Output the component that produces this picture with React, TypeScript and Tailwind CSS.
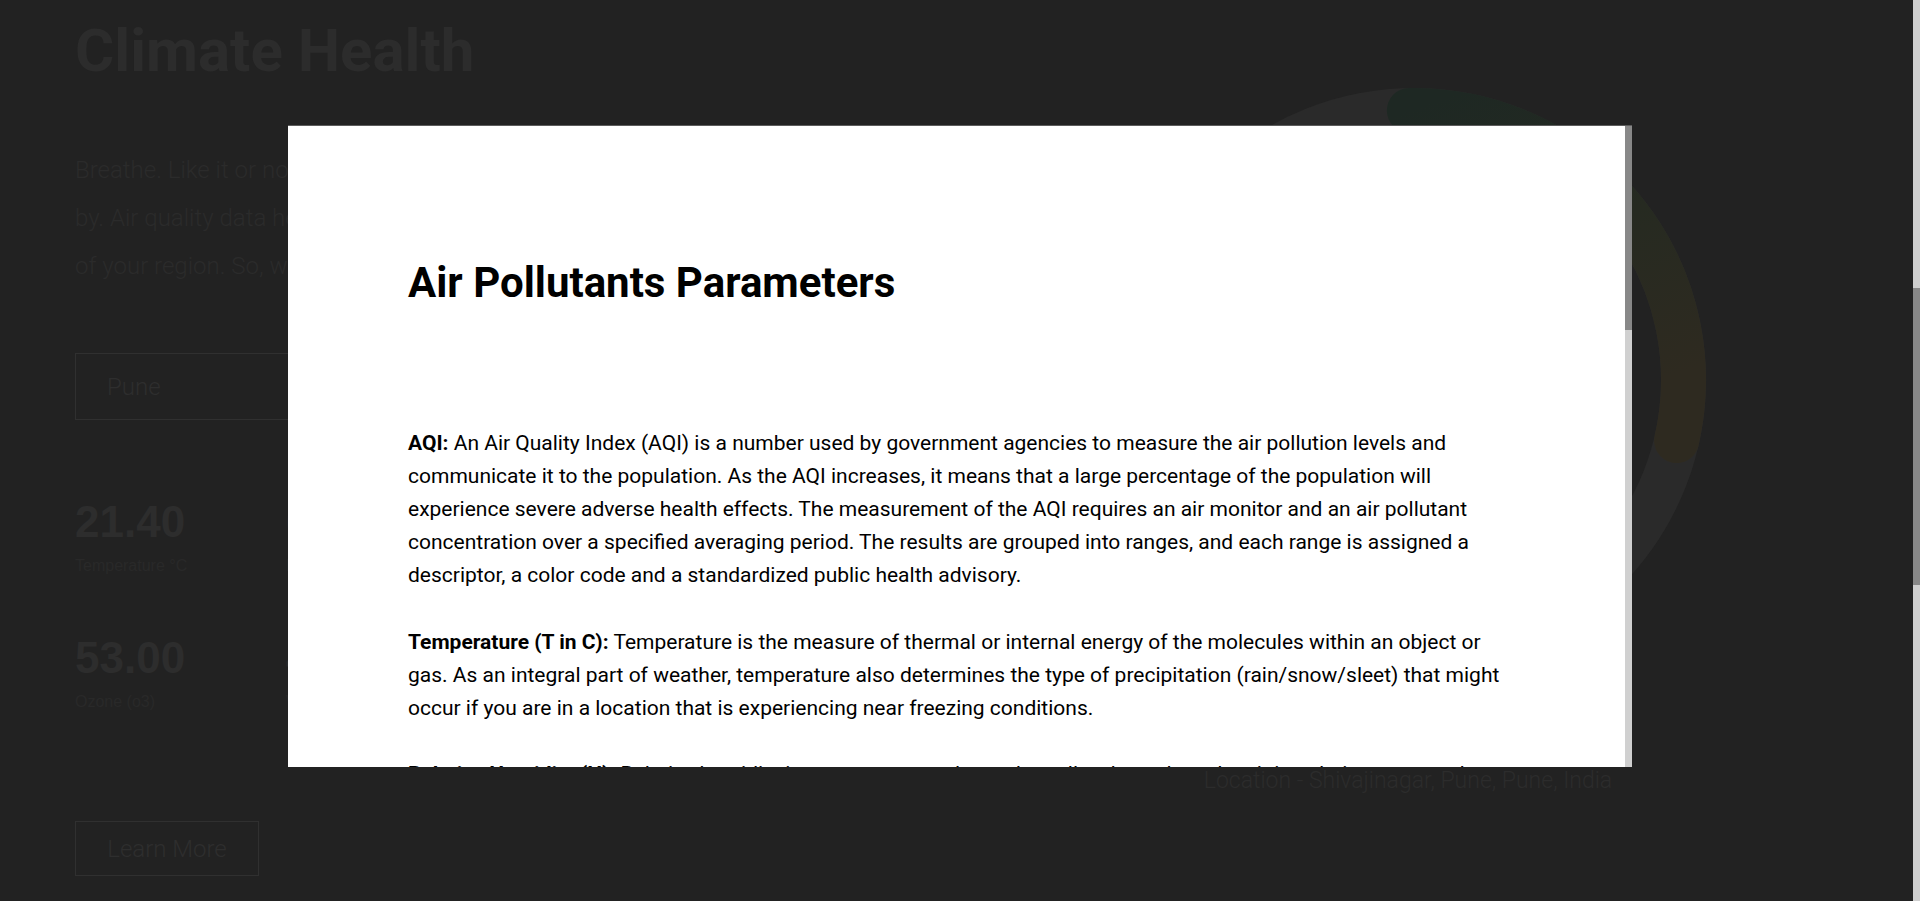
export default function App() {
  const stats = [
    { v: "21.40", l: "Temperature °C" },
    { v: "68.00", l: "Humidity %" },
    { v: "12.00", l: "PM 2.5" },
    { v: "53.00", l: "Ozone (o3)" },
    { v: "4.00", l: "Wind speed" },
    { v: "9.00", l: "NO2" },
  ];
  return (
    <div className="relative flex h-[901px] w-full overflow-hidden bg-[#222222] font-['Roboto','Liberation_Sans',sans-serif]">
      <main className="flex flex-1">
        <section className="flex-1 pl-[75px] pt-[15px]">
          <h1 className="text-[60px] font-bold leading-[72px] text-[#2c2c2c]">Climate Health</h1>
          <p className="mt-[59px] whitespace-nowrap text-[24px] font-light leading-[48px] text-[#2b2b2b]">
            <span className="block">Breathe. Like it or not, the air we breathe affects our health every minute we live</span>
            <span className="block">by. Air quality data helps you understand the pollutants in the atmosphere</span>
            <span className="block">of your region. So, what are you waiting for? Check it out.</span>
          </p>
          <div className="mt-[63px] flex h-[67px] w-[620px] items-center border border-[#303030] pl-[31px] text-[24px] font-light text-[#2e2e2e]">
            Pune
          </div>
          <div className="mt-[80px] grid grid-cols-[211px_211px_211px] gap-y-[60px] font-['Liberation_Sans',Arial,sans-serif]">
            {stats.map((s) => (
              <div key={s.l} className="flex flex-col">
                <span className="text-[44px] font-bold leading-[44px] text-[#2d2d2d]">{s.v}</span>
                <span className="mt-[12px] text-[16px] leading-[20px] text-[#292929]">{s.l}</span>
              </div>
            ))}
          </div>
          <div className="mt-[109px] flex h-[55px] w-[184px] items-center justify-center border border-[#303030] text-[24px] font-light text-[#2e2e2e]">
            Learn More
          </div>
        </section>
        <section className="mr-[199px] flex w-[600px] flex-col items-center pt-[80px]">
          <svg width="600" height="600" viewBox="0 0 600 600">
            <defs>
              <linearGradient id="arcg" x1="0" y1="0" x2="0.3" y2="1">
                <stop offset="0" stopColor="#1e2823" />
                <stop offset="0.5" stopColor="#262a21" />
                <stop offset="1" stopColor="#2e2a20" />
              </linearGradient>
            </defs>
            <circle cx="300" cy="300" r="269.5" fill="none" stroke="#2a2a2a" strokeWidth="45" />
            <path
              d="M 295.3 30.5 A 269.5 269.5 0 0 1 562.6 360.6"
              fill="none"
              stroke="url(#arcg)"
              strokeWidth="45"
              strokeLinecap="round"
            />
          </svg>
          <p className="mt-[86px] pr-[12px] text-[23px] font-light leading-[30px] text-[#2c2c2c]">
            Location - Shivajinagar, Pune, Pune, India
          </p>
        </section>
      </main>
      <div className="flex w-[7px] flex-col bg-[#cfcfcf]">
        <div className="h-[288px]" />
        <div className="h-[297px] bg-[#888888]" />
      </div>

      <div className="absolute left-[288px] top-[125px] flex h-[642px] w-[1344px] border-t border-[#5c5c5c] bg-white">
        <div className="flex-1 overflow-hidden px-[120px] pt-[132px] text-black">
          <h2 className="text-[42px] font-bold leading-[50px]">Air Pollutants Parameters</h2>
          <div className="mt-[119px] text-[21px] leading-[33.1px]">
            <p>
              <b>AQI:</b> An Air Quality Index (AQI) is a number used by government agencies to measure the air pollution levels and communicate it to the population. As the AQI increases, it means that a large percentage of the population will experience severe adverse health effects. The measurement of the AQI requires an air monitor and an air pollutant concentration over a specified averaging period. The results are grouped into ranges, and each range is assigned a descriptor, a color code and a standardized public health advisory.
            </p>
            <p className="mt-[33.1px]">
              <b>Temperature (T in C):</b> Temperature is the measure of thermal or internal energy of the molecules within an object or gas. As an integral part of weather, temperature also determines the type of precipitation (rain/snow/sleet) that might occur if you are in a location that is experiencing near freezing conditions.
            </p>
            <p className="mt-[33.1px]">
              <b>Relative Humidity (H):</b> Relative humidity is a term commonly used to tell us how close the air is to being saturated with water vapour at a given temperature, which affects how hot or cold it feels.
            </p>
          </div>
        </div>
        <div className="flex w-[7px] flex-col bg-[#d0d0d0]">
          <div className="h-[204px] bg-[#888888]" />
        </div>
      </div>
    </div>
  );
}
